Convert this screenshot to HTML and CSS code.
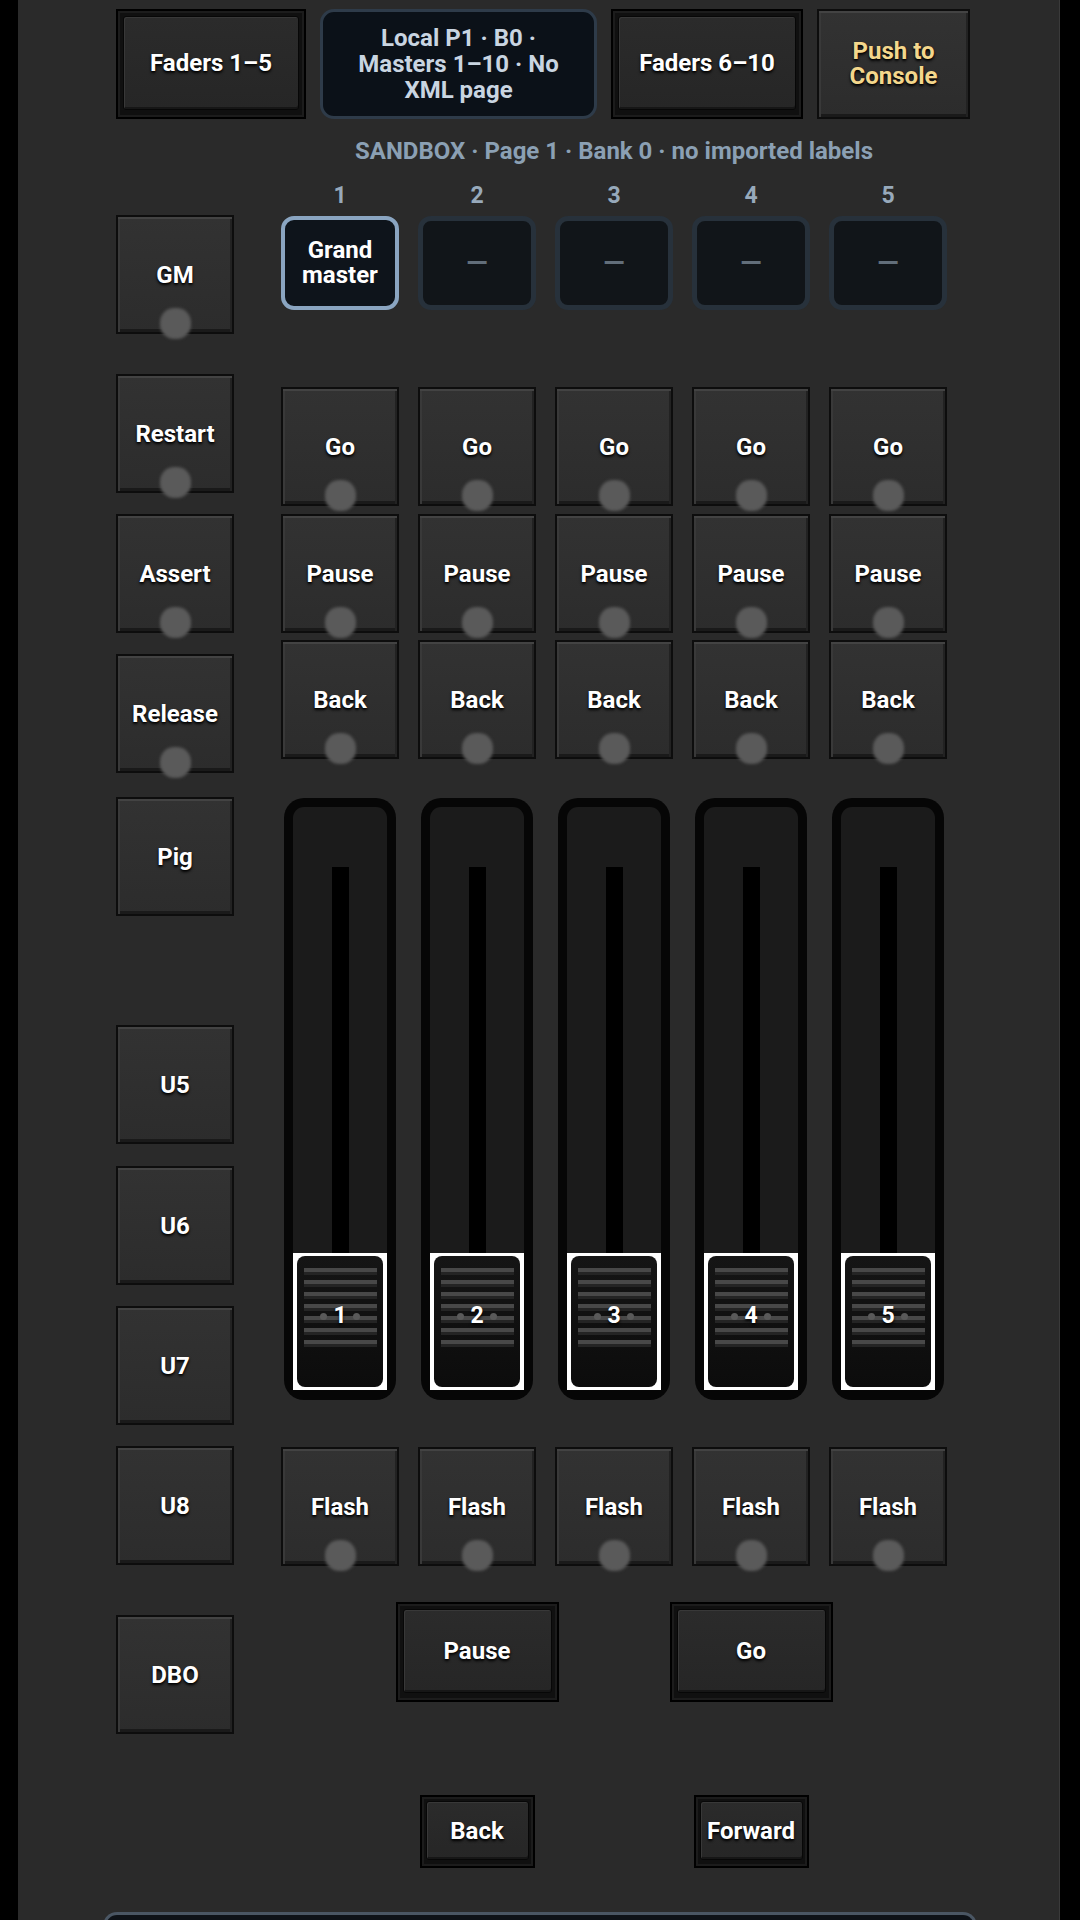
FILE: index.html
```html
<!DOCTYPE html>
<html>
<head>
<meta charset="utf-8">
<link rel="stylesheet" href="styles.css">
</head>
<body>
<div class="panel">
  <div class="top-row">
    <div class="framed w-190"><div class="face">Faders 1–5</div></div>
    <div class="info">Local P1 · B0 ·<br>Masters 1–10 · No<br>XML page</div>
    <div class="framed w-192"><div class="face">Faders 6–10</div></div>
    <div class="key push">Push to<br>Console</div>
  </div>

  <div class="console">
    <div class="left-col">
      <div class="key sq mt-96">GM<span class="led"></span></div>
      <div class="key sq mt-40">Restart<span class="led"></span></div>
      <div class="key sq mt-21">Assert<span class="led"></span></div>
      <div class="key sq mt-21">Release<span class="led"></span></div>
      <div class="key sq mt-24">Pig</div>
      <div class="key sq mt-109">U5</div>
      <div class="key sq mt-22">U6</div>
      <div class="key sq mt-21">U7</div>
      <div class="key sq mt-21">U8</div>
      <div class="key sq mt-50">DBO</div>
    </div>

    <div class="right-col">
      <div class="status">SANDBOX · Page 1 · Bank 0 · no imported labels</div>
      <div class="row5 numbers">
        <div>1</div><div>2</div><div>3</div><div>4</div><div>5</div>
      </div>
      <div class="row5 tiles">
        <div class="tile sel">Grand<br>master</div>
        <div class="tile"><span class="dash">—</span></div>
        <div class="tile"><span class="dash">—</span></div>
        <div class="tile"><span class="dash">—</span></div>
        <div class="tile"><span class="dash">—</span></div>
      </div>
      <div class="row5 mt-77">
        <div class="key sq">Go<span class="led"></span></div>
        <div class="key sq">Go<span class="led"></span></div>
        <div class="key sq">Go<span class="led"></span></div>
        <div class="key sq">Go<span class="led"></span></div>
        <div class="key sq">Go<span class="led"></span></div>
      </div>
      <div class="row5 mt-8">
        <div class="key sq">Pause<span class="led"></span></div>
        <div class="key sq">Pause<span class="led"></span></div>
        <div class="key sq">Pause<span class="led"></span></div>
        <div class="key sq">Pause<span class="led"></span></div>
        <div class="key sq">Pause<span class="led"></span></div>
      </div>
      <div class="row5 mt-7">
        <div class="key sq">Back<span class="led"></span></div>
        <div class="key sq">Back<span class="led"></span></div>
        <div class="key sq">Back<span class="led"></span></div>
        <div class="key sq">Back<span class="led"></span></div>
        <div class="key sq">Back<span class="led"></span></div>
      </div>
      <div class="row5 mt-39">
        <div class="fader"><div class="fader-inner"><div class="slot"></div><div class="knob"><div class="knob-face"><div class="grip"></div><div class="grip"></div><div class="grip"></div><div class="grip g-10"></div><div class="grip g-14"></div><div class="grip g-14"></div><div class="grip g-14"></div><div class="knob-label"><span class="dot"></span>1<span class="dot"></span></div></div></div></div></div>
        <div class="fader"><div class="fader-inner"><div class="slot"></div><div class="knob"><div class="knob-face"><div class="grip"></div><div class="grip"></div><div class="grip"></div><div class="grip g-10"></div><div class="grip g-14"></div><div class="grip g-14"></div><div class="grip g-14"></div><div class="knob-label"><span class="dot"></span>2<span class="dot"></span></div></div></div></div></div>
        <div class="fader"><div class="fader-inner"><div class="slot"></div><div class="knob"><div class="knob-face"><div class="grip"></div><div class="grip"></div><div class="grip"></div><div class="grip g-10"></div><div class="grip g-14"></div><div class="grip g-14"></div><div class="grip g-14"></div><div class="knob-label"><span class="dot"></span>3<span class="dot"></span></div></div></div></div></div>
        <div class="fader"><div class="fader-inner"><div class="slot"></div><div class="knob"><div class="knob-face"><div class="grip"></div><div class="grip"></div><div class="grip"></div><div class="grip g-10"></div><div class="grip g-14"></div><div class="grip g-14"></div><div class="grip g-14"></div><div class="knob-label"><span class="dot"></span>4<span class="dot"></span></div></div></div></div></div>
        <div class="fader"><div class="fader-inner"><div class="slot"></div><div class="knob"><div class="knob-face"><div class="grip"></div><div class="grip"></div><div class="grip"></div><div class="grip g-10"></div><div class="grip g-14"></div><div class="grip g-14"></div><div class="grip g-14"></div><div class="knob-label"><span class="dot"></span>5<span class="dot"></span></div></div></div></div></div>
      </div>
      <div class="row5 mt-47">
        <div class="key sq">Flash<span class="led"></span></div>
        <div class="key sq">Flash<span class="led"></span></div>
        <div class="key sq">Flash<span class="led"></span></div>
        <div class="key sq">Flash<span class="led"></span></div>
        <div class="key sq">Flash<span class="led"></span></div>
      </div>
      <div class="row5 mt-36">
        <div class="framed big c2"><div class="face">Pause</div></div>
        <div class="framed big c4"><div class="face">Go</div></div>
      </div>
      <div class="row5 mt-93">
        <div class="framed small c2"><div class="face">Back</div></div>
        <div class="framed small c4"><div class="face">Forward</div></div>
      </div>
    </div>
  </div>

  <div class="bottom-panel"></div>
</div>
</body>
</html>
```

FILE: styles.css
```css
* { box-sizing: border-box; }
html, body { margin: 0; padding: 0; }
body {
  background: #000;
  width: 1080px;
  height: 1920px;
  overflow: hidden;
  font-family: Roboto, "Liberation Sans", sans-serif;
  font-weight: 700;
  color: #fff;
}
.panel {
  margin-left: 18px;
  width: 1042px;
  height: 1920px;
  background: #2a2a2a;
  padding: 9px 0 0 98px;
  border-right: 1px solid #3a3a3a;
}

/* top row */
.top-row { display: flex; gap: 14px; height: 110px; }
.w-190 { width: 190px; }
.w-192 { width: 192px; }
.framed {
  border: 2px solid #000;
  background: #101010;
  padding: 5px 5px 7px;
  box-shadow: inset 0 0 0 2px #1c1c1c;
}
.framed .face {
  height: 100%;
  border: 1px solid #070707;
  border-radius: 3px;
  background: linear-gradient(180deg, #2b2b2b 0%, #262626 100%);
  box-shadow: inset 1px 1px 0 #383838, inset 0 -2px 0 #161616;
  display: flex;
  align-items: center;
  justify-content: center;
  font-size: 24px;
  text-shadow: 0 2px 3px rgba(0,0,0,1), 0 1px 1px rgba(0,0,0,0.6);
}
.info {
  width: 277px;
  border: 3px solid #2e3b49;
  border-radius: 14px;
  background: #0b1118;
  color: #c9d5e1;
  font-size: 24px;
  line-height: 26px;
  text-align: center;
  display: flex;
  align-items: center;
  justify-content: center;
}
.key {
  position: relative;
  display: flex;
  align-items: center;
  justify-content: center;
  text-align: center;
  font-size: 24px;
  text-shadow: 0 2px 3px rgba(0,0,0,1), 0 1px 1px rgba(0,0,0,0.6);
  background: linear-gradient(180deg, #323232 0%, #2c2c2c 100%);
  border: 2px solid #0d0d0d;
  box-shadow: inset 0 2px 0 #434343, inset 2px 0 0 #393939, inset -2px 0 0 #222, inset 0 -3px 0 #1a1a1a;
}
.push {
  width: 153px;
  color: #f4d78c;
  font-size: 24px;
  line-height: 25px;
}
.sq { height: 119px; }
.led {
  position: absolute;
  left: 50%;
  bottom: -7px;
  width: 31px;
  height: 31px;
  margin-left: -15.5px;
  border-radius: 46%;
  background: #5a5a5a;
  filter: blur(1.5px);
}

/* console layout */
.console { display: flex; gap: 47px; }
.left-col { width: 118px; display: flex; flex-direction: column; }
.right-col { width: 666px; display: flex; flex-direction: column; }

.mt-7 { margin-top: 7px; }
.mt-8 { margin-top: 8px; }
.mt-21 { margin-top: 21px; }
.mt-22 { margin-top: 22px; }
.mt-24 { margin-top: 24px; }
.mt-36 { margin-top: 36px; }
.mt-39 { margin-top: 39px; }
.mt-40 { margin-top: 40px; }
.mt-47 { margin-top: 47px; }
.mt-50 { margin-top: 50px; }
.mt-77 { margin-top: 77px; }
.mt-93 { margin-top: 93px; }
.mt-96 { margin-top: 96px; }
.mt-109 { margin-top: 109px; }

.status {
  margin-top: 19px;
  text-align: center;
  font-size: 24px;
  line-height: 26px;
  color: #8ba0b4;
}
.row5 {
  display: grid;
  grid-template-columns: repeat(5, 118px);
  column-gap: 19px;
}
.numbers {
  margin-top: 19px;
  text-align: center;
  font-size: 23px;
  line-height: 26px;
  color: #97a9bb;
}
.tiles { margin-top: 7px; }
.tile {
  height: 94px;
  border: 5px solid #27313b;
  border-radius: 13px;
  background: #111519;
  color: #626e7a;
  font-size: 24px;
  display: flex;
  align-items: center;
  justify-content: center;
  text-align: center;
}
.dash { font-size: 28px; line-height: 28px; }
.tile.sel {
  border: 4px solid #8aa5c1;
  background: #0e141b;
  color: #fff;
  line-height: 25px;
}

/* faders */
.fader {
  justify-self: center;
  width: 112px;
  height: 602px;
  background: #060606;
  border-radius: 20px;
  padding: 9px 9px 10px;
  display: flex;
}
.fader-inner {
  flex: 1;
  background: #1b1b1b;
  border-radius: 11px 11px 0 0;
  display: flex;
  flex-direction: column;
  align-items: center;
}
.slot {
  width: 17px;
  margin-top: 60px;
  flex: 1;
  background: #000;
}
.knob {
  width: 100%;
  height: 137px;
  background: #fff;
  padding: 3px 4px 3px 4px;
}
.knob-face {
  position: relative;
  height: 100%;
  border-radius: 8px;
  background: linear-gradient(180deg, #151515 0%, #0c0c0c 100%);
  padding: 12px 6px 0 7px;
}
.grip {
  height: 4px;
  background: #484848;
  box-shadow: 0 3px 0 #242424;
  margin-bottom: 8px;
}
.grip.g-10 { margin-top: 2px; }
.grip.g-14 { margin-top: 6px; }
.knob-label {
  position: absolute;
  left: 0;
  right: 0;
  top: 47px;
  height: 26px;
  display: flex;
  align-items: center;
  justify-content: center;
  gap: 6px;
  font-size: 23px;
  line-height: 26px;
  text-shadow: 0 2px 3px rgba(0,0,0,0.95);
}
.dot {
  width: 7px;
  height: 7px;
  border-radius: 50%;
  background: #595959;
}

/* bottom transport */
.big { width: 163px; height: 100px; justify-self: center; }
.small { width: 115px; height: 73px; justify-self: center; padding: 4px 4px 6px; }
.c2 { grid-column: 2; }
.c4 { grid-column: 4; }

.bottom-panel {
  margin-top: 44px;
  margin-left: -13px;
  width: 874px;
  height: 40px;
  border: 3px solid #4a5663;
  border-bottom: none;
  border-radius: 14px 14px 0 0;
  background: #0e1217;
}
```
